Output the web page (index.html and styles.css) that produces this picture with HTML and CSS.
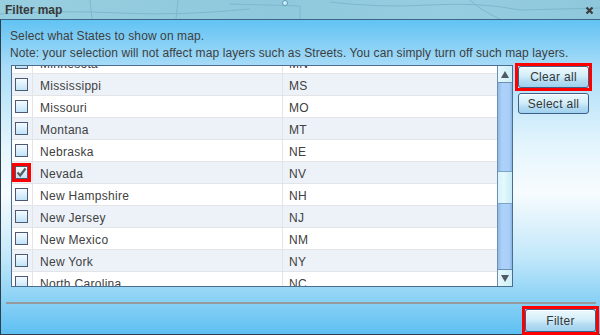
FILE: index.html
```html
<!DOCTYPE html>
<html lang="en">
<head>
    <meta charset="UTF-8">
    <meta name="viewport" content="width=device-width, initial-scale=1.0">
    <title>Filter map</title>
    <link rel="stylesheet" href="styles.css">
</head>
<body>

    <div class="window">
        <div class="titlebar">
            <svg class="map-lines" width="600" height="19" viewBox="0 0 600 19">
                <path d="M0 14 Q60 10 120 13 T250 9" />
                <path d="M90 0 L92 19 M178 0 L176 19 M230 4 L300 6 L300 19" />
                <path d="M330 2 Q380 8 430 5 T520 10 L600 8" />
                <path d="M470 0 Q480 10 500 19" />
                <circle cx="285" cy="3" r="2.5" class="pin" />
            </svg>
            <span class="title">Filter map</span>
            <svg class="close" width="9" height="9" viewBox="0 0 9 9">
                <path d="M1.5 1.5 L7.5 7.5 M7.5 1.5 L1.5 7.5" />
            </svg>
        </div>

        <div class="dialog">
            <div class="intro">
                <p>Select what States to show on map.</p>
                <p>Note: your selection will not affect map layers such as Streets. You can simply turn off such map layers.</p>
            </div>

            <div class="content">
                <div class="list">
                    <div class="rows">
                        <div class="row"><span class="cell check"><span class="box"></span></span><span class="cell name">Minnesota</span><span class="cell code">MN</span></div>
                        <div class="row alt"><span class="cell check"><span class="box"></span></span><span class="cell name">Mississippi</span><span class="cell code">MS</span></div>
                        <div class="row"><span class="cell check"><span class="box"></span></span><span class="cell name">Missouri</span><span class="cell code">MO</span></div>
                        <div class="row alt"><span class="cell check"><span class="box"></span></span><span class="cell name">Montana</span><span class="cell code">MT</span></div>
                        <div class="row"><span class="cell check"><span class="box"></span></span><span class="cell name">Nebraska</span><span class="cell code">NE</span></div>
                        <div class="row alt"><span class="cell check"><span class="box checked marked"><svg width="11" height="11" viewBox="0 0 11 11"><path d="M1.5 5.5 L4.2 8.5 L9.5 1.5" /></svg></span></span><span class="cell name">Nevada</span><span class="cell code">NV</span></div>
                        <div class="row"><span class="cell check"><span class="box"></span></span><span class="cell name">New Hampshire</span><span class="cell code">NH</span></div>
                        <div class="row alt"><span class="cell check"><span class="box"></span></span><span class="cell name">New Jersey</span><span class="cell code">NJ</span></div>
                        <div class="row"><span class="cell check"><span class="box"></span></span><span class="cell name">New Mexico</span><span class="cell code">NM</span></div>
                        <div class="row alt"><span class="cell check"><span class="box"></span></span><span class="cell name">New York</span><span class="cell code">NY</span></div>
                        <div class="row"><span class="cell check"><span class="box"></span></span><span class="cell name">North Carolina</span><span class="cell code">NC</span></div>
                    </div>
                    <div class="scrollbar">
                        <div class="arrow up"></div>
                        <div class="track"><div class="thumb"></div></div>
                        <div class="arrow down"></div>
                    </div>
                </div>

                <div class="actions">
                    <div class="mark"><button class="btn">Clear all</button></div>
                    <button class="btn select">Select all</button>
                </div>
            </div>

            <div class="separator"></div>

            <div class="footer">
                <div class="mark"><button class="btn filter">Filter</button></div>
            </div>
        </div>
    </div>

</body>
</html>
```

FILE: styles.css
```css
body {
    margin: 0;
    font-family: "Liberation Sans", Arial, sans-serif;
    font-size: 12px;
    color: #404040;
}
.window {
    width: 600px;
    height: 335px;
    overflow: hidden;
}
.titlebar {
    height: 19px;
    display: flex;
    align-items: center;
    justify-content: space-between;
    padding: 0 6px 0 5px;
    background: linear-gradient(to right, #98cfe0, #8fc8dc 45%, #97cde0 75%, #8ec7db);
    position: relative;
}
.map-lines {
    position: absolute;
    left: 0;
    top: 0;
}
.map-lines path {
    fill: none;
    stroke: #7db8cc;
    stroke-width: 1;
}
.map-lines .pin {
    fill: #cfeefa;
    stroke: #5c9bb5;
}
.title {
    position: relative;
    font-weight: bold;
    color: #383838;
}
.close {
    position: relative;
    margin-top: 2px;
}
.close path {
    stroke: #3c3c3c;
    stroke-width: 2.2;
}
.dialog {
    height: 314px;
    border-top: 1px solid #3b6684;
    border-left: 1px solid #2c3e4c;
    border-bottom: 1px solid #2c3e4c;
    background: linear-gradient(to bottom, #62c3f3 0%, #a9dcf8 15%, #e4f5fd 40%, #f7fcfe 55%, #c4e8fa 75%, #5ec0f2 100%);
}
.intro {
    padding: 8px 0 0 9px;
    line-height: 17px;
    color: #3e3e3e;
    letter-spacing: 0.1px;
}
.intro p {
    margin: 0;
}
.content {
    display: flex;
    align-items: flex-start;
    margin: 3px 0 0 10px;
}
.list {
    display: flex;
    width: 500px;
    height: 220px;
    border: 1px solid #4a6d92;
    background: #fff;
}
.rows {
    width: 485px;
    overflow: hidden;
    letter-spacing: 0.3px;
}
.row {
    display: flex;
    height: 21px;
    border-bottom: 1px solid #e2e4e7;
    background: #fff;
}
.row:first-child {
    margin-top: -14px;
}
.row.alt {
    background: #edf2f9;
}
.cell {
    display: flex;
    align-items: center;
}
.check {
    width: 20px;
    border-right: 1px solid #e2e4e7;
}
.name {
    width: 242px;
    padding: 3px 0 0 7px;
    border-right: 1px solid #e2e4e7;
}
.code {
    padding: 3px 0 0 6px;
}
.box {
    width: 11px;
    height: 11px;
    margin-left: 3px;
    border: 1px solid #4d5a74;
    background: linear-gradient(to bottom, #f4fbff, #c2e3f8);
    display: flex;
}
.box svg path {
    fill: none;
    stroke: #5a5a5a;
    stroke-width: 2.2;
}
.box.marked {
    outline: 3px solid #ff0000;
}
.scrollbar {
    width: 14px;
    border-left: 1px solid #6f8fb0;
    display: flex;
    flex-direction: column;
}
.arrow {
    height: 16px;
    background: linear-gradient(to right, #e6f8fc, #cdeff8);
    border-bottom: 1px solid #6f8fb0;
    display: flex;
    align-items: center;
    justify-content: center;
}
.arrow.down {
    border-bottom: none;
    border-top: 1px solid #6f8fb0;
}
.arrow.up::after {
    content: "";
    border-left: 4px solid transparent;
    border-right: 4px solid transparent;
    border-bottom: 7px solid #505a64;
}
.arrow.down::after {
    content: "";
    border-left: 4px solid transparent;
    border-right: 4px solid transparent;
    border-top: 7px solid #505a64;
}
.track {
    flex: 1;
    background: linear-gradient(to right, #8fbbe8, #acd2fa 30%, #a9cff8 80%, #8bb6e2);
    padding-top: 88px;
}
.thumb {
    height: 31px;
    background: linear-gradient(to right, #d6f3fb, #e5f9fd 40%, #c8ecf7);
    border-top: 1px solid #7da4c4;
    border-bottom: 1px solid #7da4c4;
}
.actions {
    display: flex;
    flex-direction: column;
    align-items: flex-start;
    gap: 2px;
    margin: -2px 0 0 2px;
}
.mark {
    display: flex;
    border: 3px solid #ff0000;
}
.btn {
    width: 71px;
    height: 22px;
    padding: 0;
    font-family: "Liberation Sans", Arial, sans-serif;
    font-size: 12px;
    letter-spacing: 0.3px;
    color: #363636;
    border: 1px solid #3f5f86;
    border-radius: 3px;
    background: linear-gradient(to bottom, #edf9fd, #d3eef9 45%, #b4dcf3 70%, #9fd0ef);
    box-shadow: inset 0 1px 0 #ffffff;
}
.btn.select {
    height: 21px;
    margin-left: 3px;
}
.separator {
    height: 2px;
    margin: 15px 4px 0 5px;
    background: #979a9c;
}
.footer {
    display: flex;
    justify-content: flex-end;
    padding: 2px 1px 0 0;
}
.btn.filter {
    height: 23px;
}
```
